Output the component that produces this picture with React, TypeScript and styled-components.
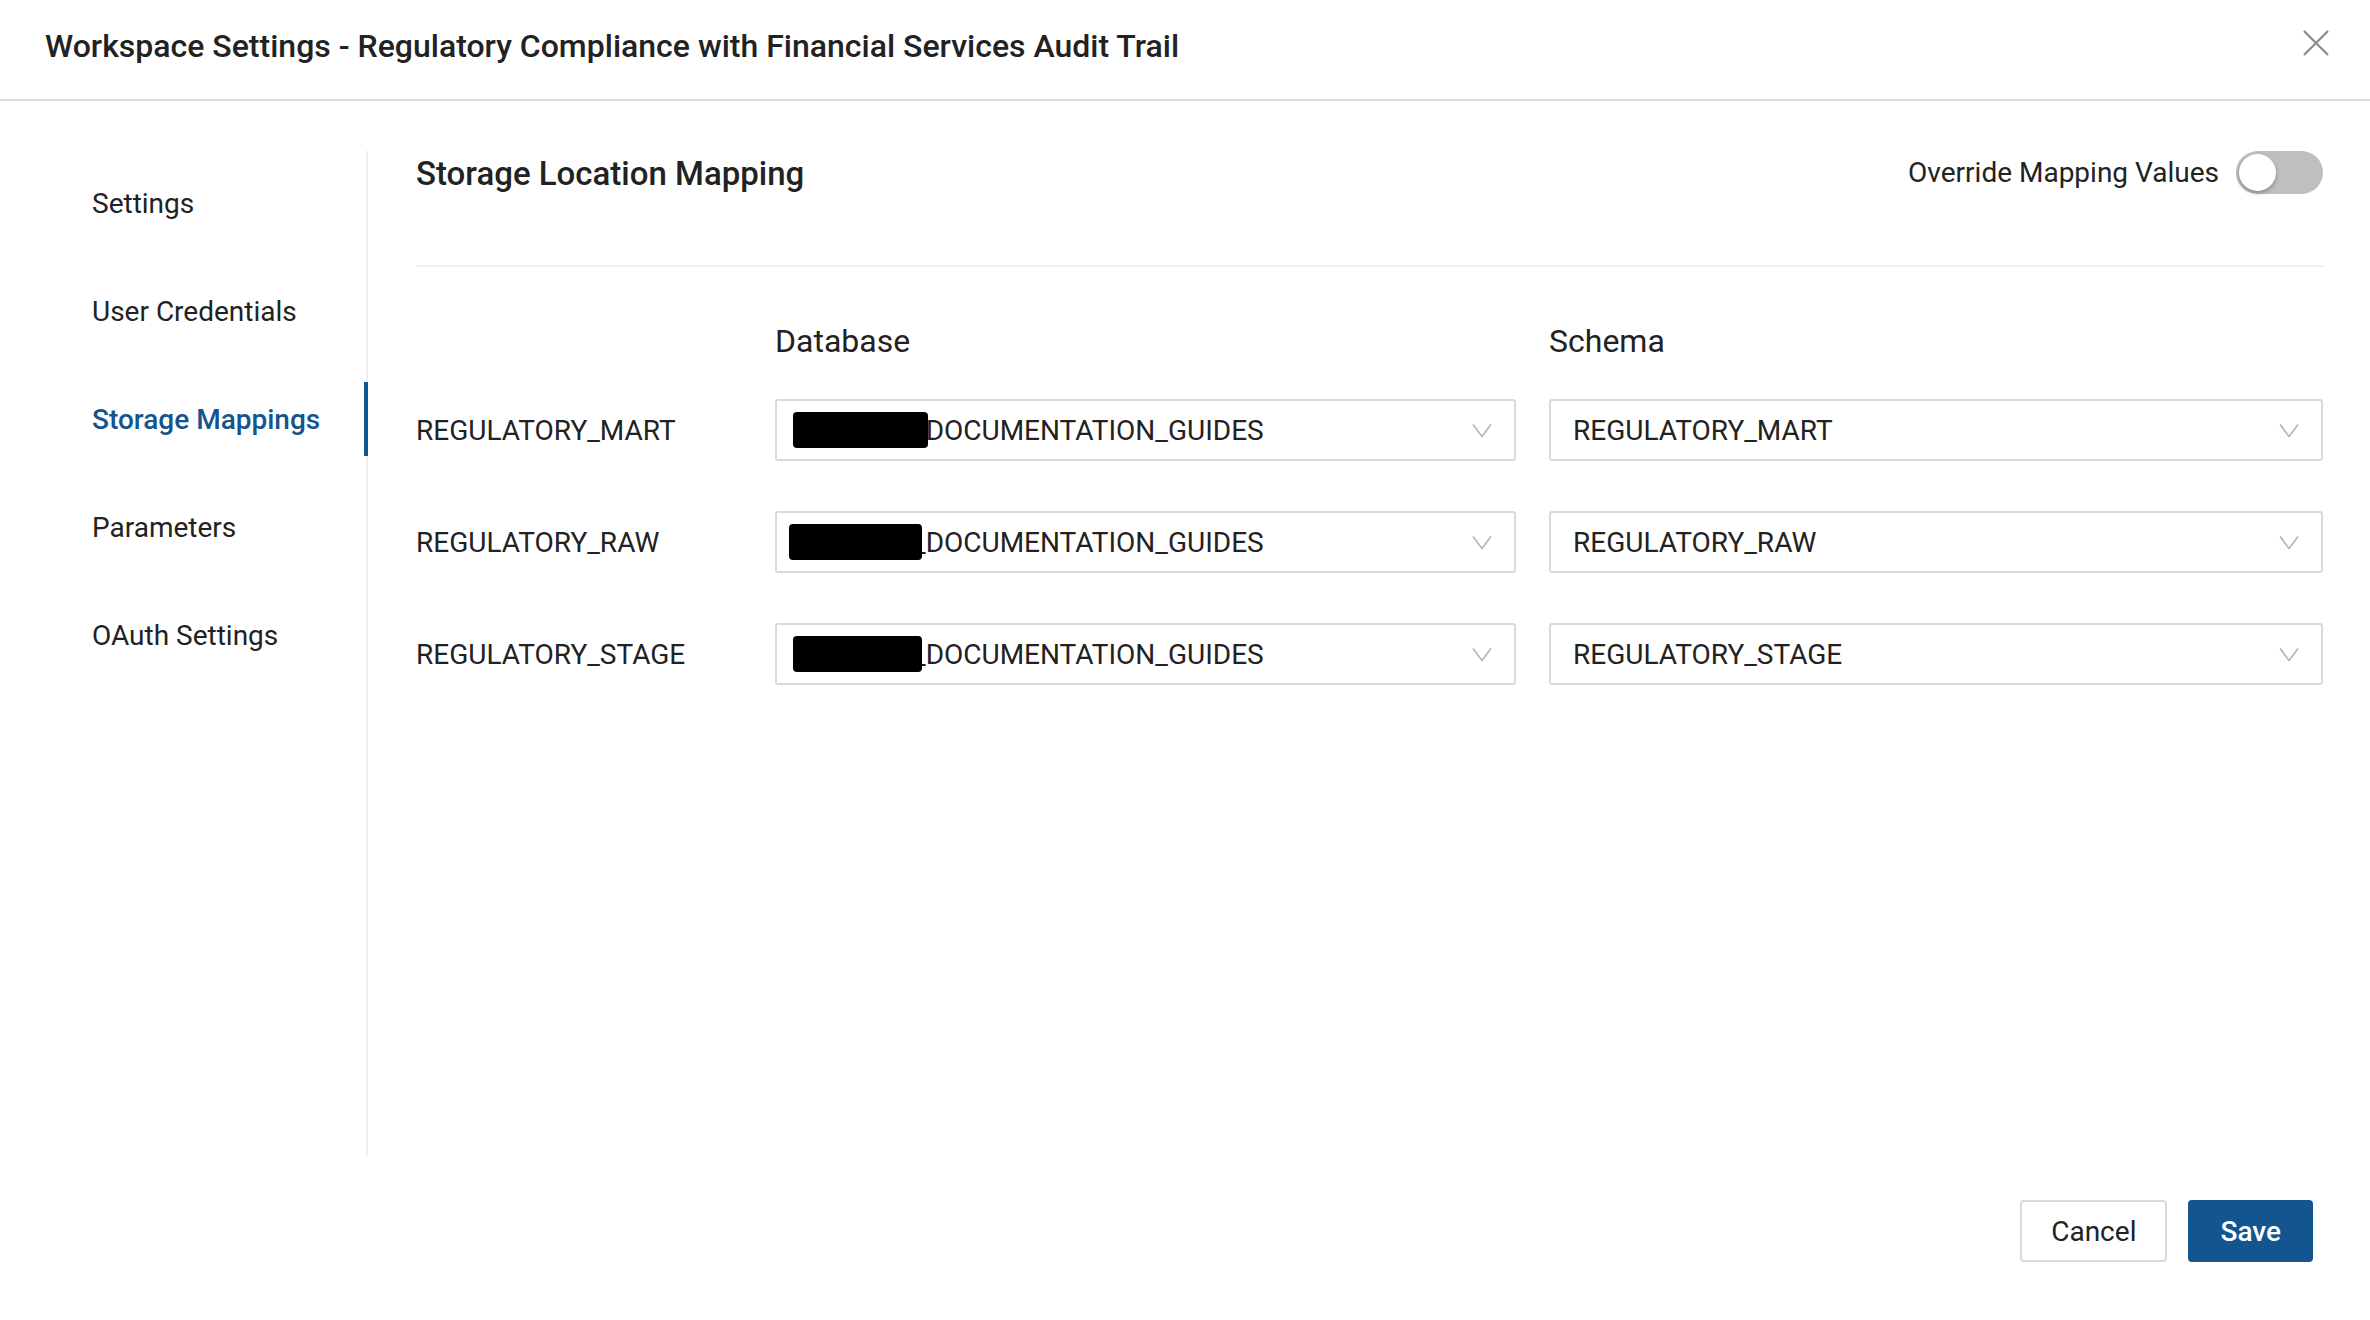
import React from "react";
import styled, { createGlobalStyle } from "styled-components";

const Global = createGlobalStyle`
  html, body { margin: 0; padding: 0; background: #fff; }
  body { font-family: Roboto, "Liberation Sans", Arial, sans-serif; color: #222; }
  * { box-sizing: border-box; }
`;

const Page = styled.div`
  width: 2370px;
  height: 1320px;
  display: flex;
  flex-direction: column;
  background: #fff;
`;

const Header = styled.header`
  height: 101px;
  flex: none;
  display: flex;
  align-items: center;
  justify-content: space-between;
  padding: 0 41px 8px 45px;
  border-bottom: 2px solid #dcdcdc;
`;

const Title = styled.h1`
  margin: 0;
  font-size: 32px;
  font-weight: 500;
  color: #222;
  letter-spacing: 0;
`;

const CloseButton = styled.button`
  width: 26px;
  height: 26px;
  padding: 0;
  border: none;
  background: none;
  display: flex;
  cursor: pointer;
  margin-top: -6px;
`;

const Body = styled.div`
  flex: none;
  height: 1055px;
  padding-top: 50px;
  display: flex;
`;

const Sidebar = styled.nav`
  width: 368px;
  flex: none;
  border-right: 2px solid #eeeeee;
  padding-top: 15px;
  display: flex;
  flex-direction: column;
  gap: 34px;
`;

const NavItem = styled.div<{ $active?: boolean }>`
  height: 74px;
  display: flex;
  align-items: center;
  padding-left: 92px;
  margin-right: -2px;
  border-right: 4px solid ${(p) => (p.$active ? "#13558f" : "transparent")};
  font-size: 28px;
  font-weight: ${(p) => (p.$active ? 500 : 400)};
  color: ${(p) => (p.$active ? "#13558f" : "#222")};
  cursor: pointer;
`;

const Content = styled.main`
  flex: 1;
  padding: 0 47px 0 48px;
  display: flex;
  flex-direction: column;
`;

const ContentHeader = styled.div`
  height: 44px;
  display: flex;
  align-items: center;
  justify-content: space-between;
`;

const SectionTitle = styled.h2`
  margin: 0;
  font-size: 33px;
  font-weight: 500;
  color: #222;
`;

const OverrideGroup = styled.label`
  display: flex;
  align-items: center;
  gap: 17px;
  font-size: 28px;
  color: #222;
  margin-top: -2px;
`;

const Track = styled.span`
  width: 87px;
  height: 43px;
  border-radius: 22px;
  background: #bfbfbf;
  display: flex;
  align-items: center;
  padding-left: 3px;
`;

const Knob = styled.span`
  width: 37px;
  height: 37px;
  border-radius: 50%;
  background: #fff;
  box-shadow: 0 2px 4px rgba(0, 0, 0, 0.3);
`;

const Divider = styled.hr`
  margin: 70px 0 55px;
  border: none;
  border-top: 2px solid #f0f0f0;
`;

const Grid = styled.div`
  display: grid;
  grid-template-columns: 326px 741px 1fr;
  column-gap: 33px;
  row-gap: 50px;
  align-items: center;
`;

const HeaderGrid = styled(Grid)`
  margin-bottom: 39px;
`;

const ColHeader = styled.div`
  font-size: 32px;
  line-height: 38px;
  color: #222;
`;

const RowLabel = styled.div`
  font-size: 28px;
  color: #222;
`;

const Select = styled.div<{ $pad: number }>`
  height: 62px;
  border: 2px solid #dadada;
  border-radius: 3px;
  display: flex;
  align-items: center;
  justify-content: space-between;
  padding: 0 22px 0 ${(p) => p.$pad}px;
  font-size: 28px;
  color: #222;
  background: #fff;
`;

const Value = styled.span`
  display: flex;
  align-items: center;
`;

const Redact = styled.span<{ $w: number; $shift: number }>`
  display: inline-block;
  position: relative;
  z-index: 1;
  width: ${(p) => p.$w}px;
  height: 36px;
  margin-left: ${(p) => p.$shift}px;
  background: #000;
  border-radius: 4px;
`;

const Suffix = styled.span<{ $pull: number }>`
  margin-left: ${(p) => p.$pull}px;
`;

const Footer = styled.footer`
  flex: 1;
  display: flex;
  justify-content: flex-end;
  align-items: flex-start;
  gap: 21px;
  padding: 44px 57px 0 0;
`;

const Button = styled.button<{ $primary?: boolean }>`
  height: 62px;
  padding: 0 ${(p) => (p.$primary ? 30 : 29)}px;
  font-family: Roboto, "Liberation Sans", Arial, sans-serif;
  font-size: 28px;
  font-weight: ${(p) => (p.$primary ? 500 : 400)};
  border-radius: 4px;
  cursor: pointer;
  color: ${(p) => (p.$primary ? "#fff" : "#222")};
  background: ${(p) => (p.$primary ? "#13558f" : "#fff")};
  border: 2px solid ${(p) => (p.$primary ? "#13558f" : "#d9d9d9")};
`;

const Chevron = () => (
  <svg width="20" height="15" viewBox="0 0 20 15" fill="none">
    <path d="M1 1.5 L10 13.5 L19 1.5" stroke="#b3b3b3" strokeWidth="1.6" />
  </svg>
);

const CloseIcon = () => (
  <svg width="26" height="26" viewBox="0 0 26 26" fill="none">
    <path d="M1 1 L25 25 M25 1 L1 25" stroke="#8a8a8a" strokeWidth="2.2" />
  </svg>
);

const navItems = ["Settings", "User Credentials", "Storage Mappings", "Parameters", "OAuth Settings"];

const rows = [
  { label: "REGULATORY_MART", w: 135, shift: 0, pull: -15 },
  { label: "REGULATORY_RAW", w: 133, shift: -4, pull: -9 },
  { label: "REGULATORY_STAGE", w: 129, shift: 0, pull: -9 },
];

export default function App() {
  return (
    <Page>
      <Global />
      <Header>
        <Title>Workspace Settings - Regulatory Compliance with Financial Services Audit Trail</Title>
        <CloseButton aria-label="Close">
          <CloseIcon />
        </CloseButton>
      </Header>
      <Body>
        <Sidebar>
          {navItems.map((n) => (
            <NavItem key={n} $active={n === "Storage Mappings"}>
              {n}
            </NavItem>
          ))}
        </Sidebar>
        <Content>
          <ContentHeader>
            <SectionTitle>Storage Location Mapping</SectionTitle>
            <OverrideGroup>
              Override Mapping Values
              <Track>
                <Knob />
              </Track>
            </OverrideGroup>
          </ContentHeader>
          <Divider />
          <HeaderGrid>
            <div />
            <ColHeader>Database</ColHeader>
            <ColHeader>Schema</ColHeader>
          </HeaderGrid>
          <Grid>
            {rows.map((r) => (
              <React.Fragment key={r.label}>
                <RowLabel>{r.label}</RowLabel>
                <Select $pad={16}>
                  <Value>
                    <Redact $w={r.w} $shift={r.shift} />
                    <Suffix $pull={r.pull}>_DOCUMENTATION_GUIDES</Suffix>
                  </Value>
                  <Chevron />
                </Select>
                <Select $pad={22}>
                  <Value>{r.label}</Value>
                  <Chevron />
                </Select>
              </React.Fragment>
            ))}
          </Grid>
        </Content>
      </Body>
      <Footer>
        <Button>Cancel</Button>
        <Button $primary>Save</Button>
      </Footer>
    </Page>
  );
}
